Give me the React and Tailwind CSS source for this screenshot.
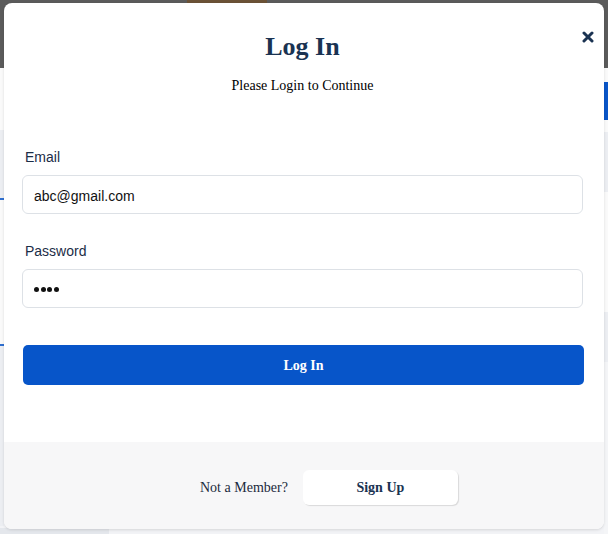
import React from "react";

const serif = { fontFamily: '"Liberation Serif", "Times New Roman", serif' };
const sans = { fontFamily: '"Liberation Sans", Arial, sans-serif' };

export default function App() {
  return (
    <div className="relative w-[608px] h-[534px] overflow-hidden bg-[#f2f3f6]">
      {/* background page (dimmed) */}
      <div className="h-[68px] bg-[#5b5b5b] flex">
        <div className="ml-[187px] w-[80px] h-[3px] bg-[#6b5236]" />
      </div>
      <div className="flex">
        <div className="w-[4px] flex flex-col">
          <div className="h-[62px] bg-[#fafafa]" />
          <div className="h-[68px] bg-[#eceef2]" />
          <div className="h-[2px] bg-[#2f6fd0]" />
          <div className="h-[144px] bg-[#fafafa]" />
          <div className="h-[2px] bg-[#2f6fd0]" />
          <div className="h-[180px] bg-[#eceef2]" />
        </div>
        <div className="flex-1" />
        <div className="w-[4px] flex flex-col">
          <div className="h-[14px] bg-[#fafafa]" />
          <div className="h-[38px] bg-[#0a56c8]" />
          <div className="h-[12px] bg-[#fafafa]" />
          <div className="h-[60px] bg-[#eceef2]" />
          <div className="h-[120px] bg-[#fafafa]" />
          <div className="h-[50px] bg-[#eceef2]" />
          <div className="h-[180px] bg-[#f4f5f7]" />
        </div>
      </div>
      <div className="absolute left-0 bottom-0 w-[109px] h-[6px] bg-[#e4e7ec]" />

      {/* modal */}
      <div className="absolute left-[4px] top-[3px] w-[600px] h-[526px] bg-white rounded-[8px] shadow-[0_1px_3px_rgba(0,0,0,0.12)] overflow-hidden flex flex-col">
        <button className="absolute right-[10px] top-[27px] w-[13px] h-[13px] flex items-center justify-center">
          <svg width="12" height="12" viewBox="0 0 12 12">
            <path d="M2 2 L10 10 M10 2 L2 10" stroke="#1b3352" strokeWidth="3" strokeLinecap="round" fill="none" />
          </svg>
        </button>

        <div className="flex-1 pl-[18px] pr-[21px] pt-[29px] flex flex-col">
          <h1 style={serif} className="text-center text-[26px] leading-[30px] font-bold text-[#1a3352]">
            Log In
          </h1>
          <p style={serif} className="mt-[14px] text-center text-[14px] leading-[20px] text-black">
            Please Login to Continue
          </p>

          <label style={sans} className="mt-[51px] pl-[3px] text-[14px] leading-[20px] text-[#1b2d47]">
            Email
          </label>
          <div
            style={sans}
            className="mt-[8px] h-[39px] rounded-[6px] border border-[#dde1e6] flex items-center pl-[11px] pt-[3px] text-[14px] text-[#111]"
          >
            abc@gmail.com
          </div>

          <label style={sans} className="mt-[27px] pl-[3px] text-[14px] leading-[20px] text-[#1b2d47]">
            Password
          </label>
          <div className="mt-[8px] h-[39px] rounded-[6px] border border-[#dde1e6] flex items-center pl-[11px] pt-[1px] gap-[1.5px]">
            <span className="w-[5px] h-[5px] rounded-full bg-[#111]" />
            <span className="w-[5px] h-[5px] rounded-full bg-[#111]" />
            <span className="w-[5px] h-[5px] rounded-full bg-[#111]" />
            <span className="w-[5px] h-[5px] rounded-full bg-[#111]" />
          </div>

          <button
            style={serif}
            className="mt-[37px] ml-[1px] -mr-[1px] h-[40px] rounded-[5px] bg-[#0755c9] text-white text-[14px] font-bold"
          >
            Log In
          </button>
        </div>

        <div className="h-[87px] bg-[#f7f7f8] flex items-center pl-[196px] pt-[3px]">
          <span style={serif} className="text-[14px] text-[#1b2a3d]">
            Not a Member?
          </span>
          <button
            style={serif}
            className="ml-[15px] w-[155px] h-[35px] rounded-[6px] bg-white shadow-[1px_1px_1px_rgba(0,0,0,0.12)] text-[14px] font-bold text-[#1a3352]"
          >
            Sign Up
          </button>
        </div>
      </div>
    </div>
  );
}
